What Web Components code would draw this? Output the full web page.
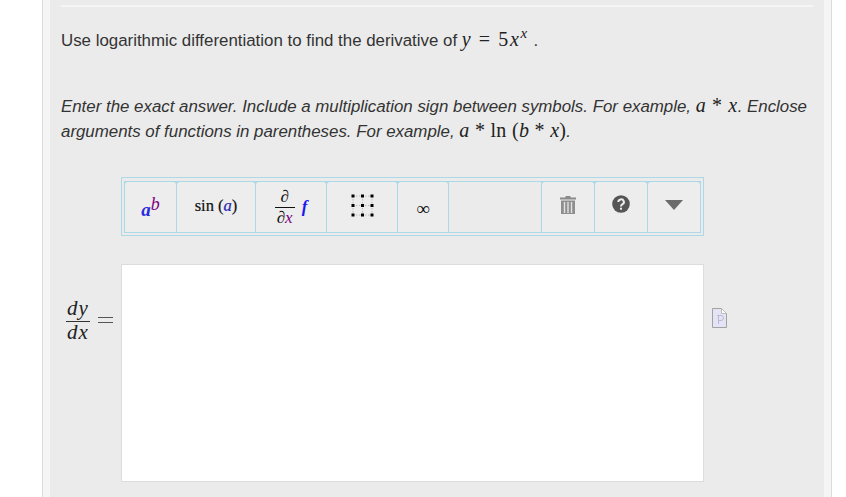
<!DOCTYPE html>
<html lang="en"><head><meta charset="utf-8"><title>Logarithmic differentiation</title>
<style>html,body{margin:0;background:#fff;height:100%;overflow:hidden}</style></head>
<body>
<template id="q-math"><style>
:host{display:inline;font-family:"Liberation Serif",serif;font-size:20px;line-height:0;color:#222;font-style:normal;letter-spacing:.3px;white-space:nowrap}
</style><slot></slot></template>
<template id="q-var"><style>
:host{display:inline;font-family:"Liberation Serif",serif;font-style:italic;font-weight:400;color:inherit}
</style><slot></slot></template>
<template id="q-frame"><style>
:host{display:block;box-sizing:border-box;margin:0 14px 0 42px;height:497px;border-left:1px solid #dcdcdc;border-right:1px solid #dcdcdc;padding:0 7px;background:#f5f5f5;overflow:hidden}
.panel{box-sizing:border-box;height:100%;background:#ebebeb;padding:5px 11px 0;font:16.88px "Liberation Sans",Arial,sans-serif;color:#333}
</style><div class="panel"><slot></slot></div></template>
<template id="q-prompt"><style>
:host{display:block;border-top:2px solid #f5f5f5}
.lead{padding-top:21px;height:25px;line-height:25px;white-space:nowrap}
.hint{margin-top:41px;font-style:italic;line-height:25px;white-space:nowrap}
::slotted([slot=hint]){display:block}
</style><div class="lead"><slot name="lead"></slot></div><div class="hint"><slot name="hint"></slot></div></template>
<template id="q-toolbar"><style>
:host{display:flex;box-sizing:border-box;width:583px;height:59px;margin:33px 0 0 60px;border:1px solid #add8e6;padding:3px 2px 2px 2px;background:#ebebeb}
.in{display:flex;flex:1;border:1px solid #add8e6;background:#add8e6;gap:1px}
::slotted(q-tool){flex:none}
</style><div class="in"><slot></slot></div></template>
<template id="q-tool"><style>
:host{display:flex;align-items:center;justify-content:center;box-sizing:border-box;height:100%;background:#ededed;border-radius:3px 3px 0 0;font-family:"Liberation Serif",serif;color:#111}
</style><slot></slot></template>
<template id="q-answer"><style>
:host{display:flex;margin-top:28px;align-items:flex-start}
.label{width:60px;flex:none;display:flex;align-items:center;gap:8px;padding:34px 0 0 5px;box-sizing:border-box;height:78px;font-family:"Liberation Serif",serif;font-size:21px;color:#222}
.frac{display:flex;flex-direction:column;align-items:center;width:24px;font-style:italic;letter-spacing:1px}
.frac span{line-height:20px;text-align:center}
.frac span:first-child{border-bottom:1px solid #333;width:100%;padding-bottom:3px}
.eq{width:15px;height:4px;border-top:1px solid #555;border-bottom:1px solid #555}
.box{box-sizing:border-box;width:583px;height:218px;background:#fff;border:1px solid #dcdcdc;flex:none}
.side{flex:none;display:flex;padding:44px 0 0 8px}
</style><div class="label"><div class="frac"><span>dy</span><span>dx</span></div><div class="eq" role="img" aria-label="equals"></div></div>
<div class="box"></div><div class="side"><slot></slot></div></template>
<script>
function def(name){customElements.define(name,class extends HTMLElement{constructor(){super();this.attachShadow({mode:"open"}).appendChild(document.getElementById(name).content.cloneNode(true));}});}
["q-math","q-var","q-frame","q-prompt","q-toolbar","q-tool","q-answer"].forEach(def);
</script>
<q-frame>
<q-prompt>
<span slot="lead">Use logarithmic differentiation to find the derivative of <q-math style="letter-spacing:1.6px"><q-var>y</q-var> = 5<q-var>x</q-var><q-var style="font-size:15px;position:relative;top:-8px">x</q-var></q-math> .</span>
<span slot="hint">Enter the exact answer. Include a multiplication sign between symbols. For example, <q-math style="letter-spacing:.6px"><q-var>a</q-var> * <q-var>x</q-var></q-math>. Enclose</span>
<span slot="hint">arguments of functions in parentheses. For example, <q-math><q-var>a</q-var> * ln (<q-var>b</q-var> * <q-var>x</q-var>)</q-math>.</span>
</q-prompt>
<q-toolbar>
<q-tool style="width:51px"><span style="font:italic bold 19px 'Liberation Serif',serif;color:#2a2ae0;margin-top:6px">a</span><span style="font:italic 18px 'Liberation Serif',serif;color:#800080;margin-top:-6px">b</span></q-tool>
<q-tool style="width:78px"><span style="font-size:16.5px;-webkit-text-stroke:.2px #111;margin-top:-2px">sin (<i style="color:#2a2ae0">a</i>)</span></q-tool>
<q-tool style="width:70px"><span style="display:inline-flex;flex-direction:column;align-items:center;width:20px;font-size:17px;line-height:20px"><span style="border-bottom:1px solid #111;width:100%;text-align:center">∂</span><span>∂<i style="color:#800080">x</i></span></span><i style="font-size:17px;font-weight:700;color:#1a1aee;margin-left:7px">f</i></q-tool>
<q-tool style="width:70px"><svg width="23" height="23" viewBox="0 0 23 23" role="img" aria-label="matrix" style="margin-top:-4px"><path d="M2 2H21M2 11.500H21M2 21H21M2 2V21M11.500 2V21M21 2V21" stroke="#bbb" stroke-width="1" stroke-dasharray="1.500 1.500" fill="none"/><g fill="#000"><rect x=".5" y=".5" width="3" height="3"/><rect x="10" y=".5" width="3" height="3"/><rect x="19.500" y=".5" width="3" height="3"/><rect x=".5" y="10" width="3" height="3"/><rect x="10" y="10" width="3" height="3"/><rect x="19.500" y="10" width="3" height="3"/><rect x=".5" y="19.500" width="3" height="3"/><rect x="10" y="19.500" width="3" height="3"/><rect x="19.500" y="19.500" width="3" height="3"/></g></svg></q-tool>
<q-tool style="width:50px"><span style="font:19px 'Liberation Serif',serif;margin-top:3px">∞</span></q-tool>
<q-tool style="width:92px;border-radius:0;background:#ebebeb"></q-tool>
<q-tool style="width:52px"><svg width="18" height="20" viewBox="0 0 18 20" role="img" aria-label="delete" style="margin-top:-4px"><path d="M6.500 1H11.500V2.500H17V4.500H1V2.500H6.500Z" fill="#8a8a8a"/><path d="M2 5.500H16V19H2Z" fill="#8f8f8f"/><path d="M5.500 7V18M9 7V18M12.500 7V18" stroke="#e3e3e3" stroke-width="1.400"/></svg></q-tool>
<q-tool style="width:52px"><svg width="20" height="20" viewBox="0 0 20 20" role="img" aria-label="help" style="margin-top:-6px"><circle cx="10" cy="10" r="8.800" fill="#555"/><path d="M7.300 8A2.800 2.600 0 1 1 11.500 10.200C10.500 10.800 10 11.200 10 12.500" fill="none" stroke="#eee" stroke-width="2"/><rect x="9" y="13.700" width="2" height="2" fill="#eee"/></svg></q-tool>
<q-tool style="width:52px"><svg width="18" height="12" viewBox="0 0 18 12" role="img" aria-label="more" style="margin-top:-4px"><path d="M0 1H18L9 11Z" fill="#6b6b6b"/></svg></q-tool>
</q-toolbar>
<q-answer><svg width="15" height="20" viewBox="0 0 15 20" role="img" aria-label="preview"><path d="M.5.500H9.500L14.500 5.500V19.500H.5Z" fill="#e4e4f6" stroke="#a2a2a2"/><path d="M9.500.500V5.500H14.500Z" fill="#fff" stroke="#bbb"/><path d="M5 7.500H9A2 2 0 0 1 9 12.500H6.500M6.500 7.500V16" fill="none" stroke="#bbbbd0"/></svg></q-answer>
</q-frame>
</body></html>
